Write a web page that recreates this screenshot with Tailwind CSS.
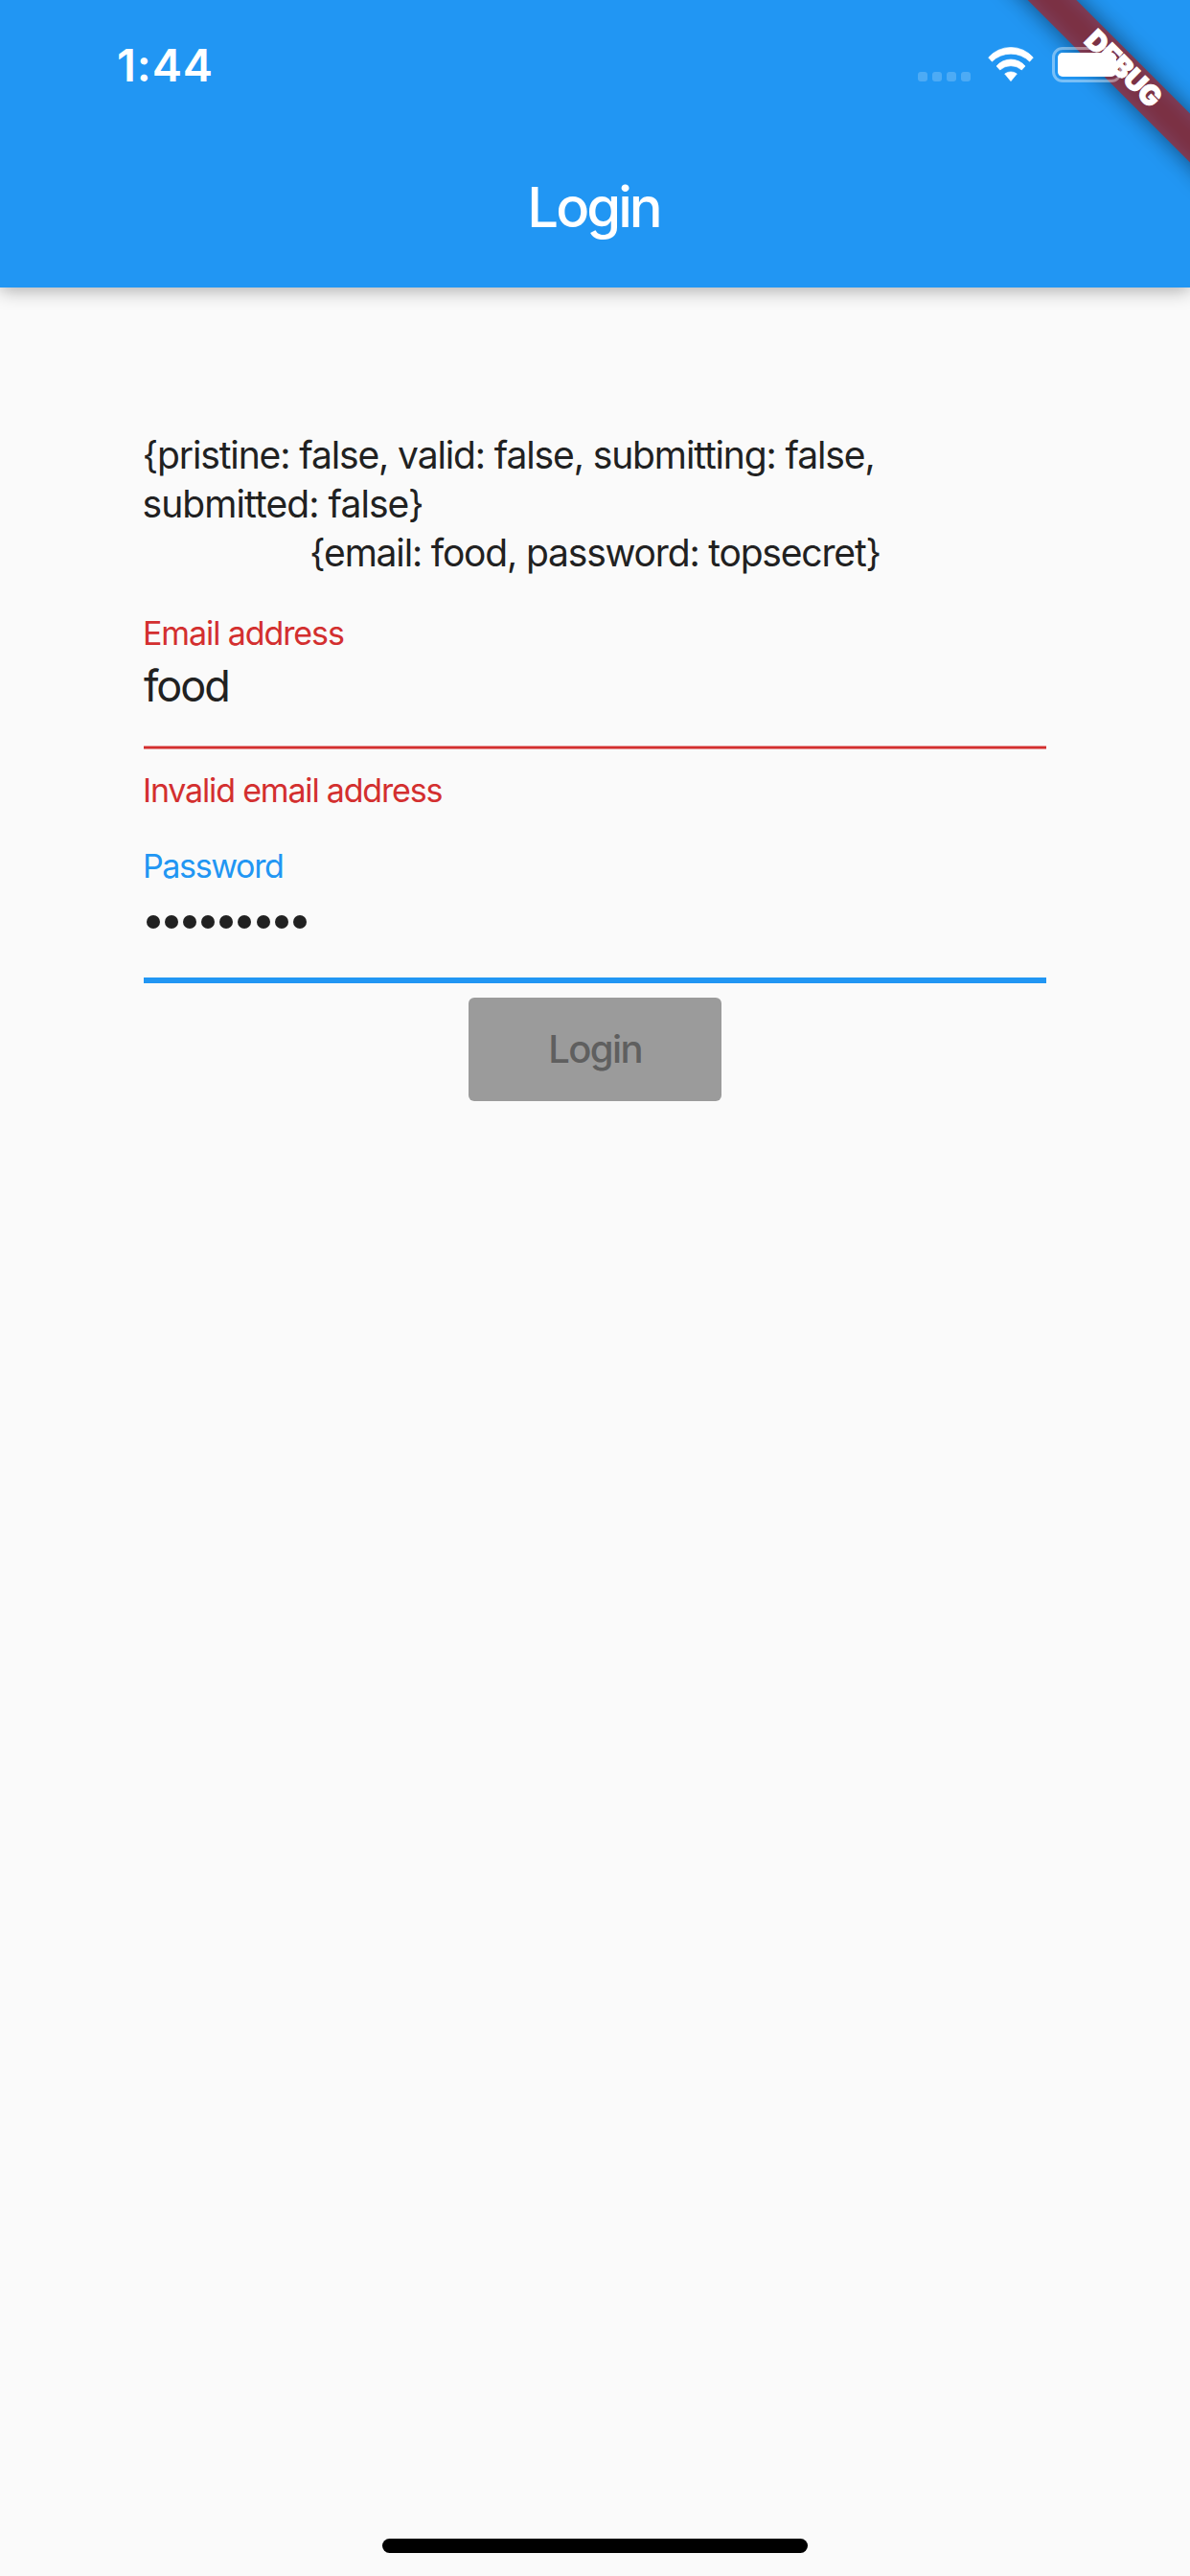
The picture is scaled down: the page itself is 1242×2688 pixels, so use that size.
<!DOCTYPE html>
<html lang="en">
<head>
<meta charset="utf-8">
<title>Login</title>
<script src="https://cdn.jsdelivr.net/npm/@tailwindcss/browser@4"></script>
</head>
<body class="bg-[#fafafa]">
<div class="relative flex h-[2688px] w-[1242px] flex-col overflow-hidden bg-[#fafafa] font-['Inter',sans-serif] text-[#212121]">
  <header class="flex h-[300px] shrink-0 flex-col bg-[#2196f3] text-white shadow-[0_3px_18px_rgba(0,0,0,0.32)]">
    <!-- Status bar -->
    <div class="flex h-[132px] items-start justify-between pl-[122px] pr-[64px]">
      <span class="mt-10 text-[47px] font-semibold leading-[56px] tracking-[0.9px]">1:44</span>
      <div class="relative z-20 mt-[49px] flex items-start">
        <div class="mt-[26px] flex gap-[5px]">
          <i class="size-[10px] rounded-[3px] bg-white/20"></i>
          <i class="size-[10px] rounded-[3px] bg-white/20"></i>
          <i class="size-[10px] rounded-[3px] bg-white/20"></i>
          <i class="size-[10px] rounded-[3px] bg-white/20"></i>
        </div>
        <svg class="ml-[18px] h-[37px] w-[48px]" viewBox="34 27 144 111" fill="#fff" stroke="#fff" stroke-width="2" stroke-linejoin="round">
          <path d="M36 60A93 93 0 0 1 176 60L165 72.500A84.500 84.500 0 0 0 47 72.500ZM61 87A59 59 0 0 1 151 87L140 99A51 51 0 0 0 72 99ZM87 111A32 32 0 0 1 125 111L106 134Z"/>
        </svg>
        <svg class="ml-[19px] h-[37px] w-[80px]" viewBox="0 0 80 37" fill="none">
          <rect x="1.500" y="1.500" width="70" height="34" rx="9.500" stroke="#fff" stroke-opacity=".4" stroke-width="3"/>
          <rect x="6" y="6" width="61" height="25" rx="5" fill="#fff"/>
          <path d="M76 12.500c3 1 4 3 4 6s-1 5-4 6z" fill="#fff" fill-opacity=".4"/>
        </svg>
      </div>
    </div>
    <div class="flex h-[168px] items-center justify-center">
      <h1 class="pr-[3px] text-[58px] font-medium leading-[70px] tracking-[-3px]">Login</h1>
    </div>
  </header>

  <!-- Corner debug ribbon -->
  <div class="absolute right-0 top-0 z-10 size-[300px] overflow-hidden">
    <div class="absolute left-[-71px] top-[54.500px] h-[36px] w-[600px] rotate-45">
      <div class="absolute inset-0 bg-black/50 blur-[12px]"></div>
      <div class="absolute inset-0 flex items-center justify-center bg-[#b71c1c]/63">
        <span class="relative top-[-2px] text-[29px] font-black leading-[36px] tracking-[-0.4px] text-white [-webkit-text-stroke:1px_white]">DEBUG</span>
      </div>
    </div>
  </div>

  <main class="flex flex-col px-[150px] pt-[149px]">
    <p class="ml-[-1.500px] whitespace-nowrap text-[39px] leading-[51px]"><span class="tracking-[-1.12px]">{pristine: false, valid: false, submitting: false,</span><br><span class="tracking-[-0.92px]">submitted: false}</span></p>
    <p class="text-center text-[39px] leading-[51px] tracking-[-1.17px]">{email: food, password: topsecret}</p>

    <label class="ml-[-1px] mt-[39px] text-[34px] leading-[40px] tracking-[-1.1px] text-[#d32f2f]">Email address</label>
    <div class="mt-[7px] text-[45px] leading-[56px] tracking-[-2px]">food</div>
    <div class="mt-[34px] h-1 border-y border-[#d32f2f]/50 bg-[#d32f2f] bg-clip-padding"></div>
    <p class="ml-[-1px] mt-[23px] text-[34px] leading-[40px] tracking-[-1.18px] text-[#d32f2f]">Invalid email address</p>

    <label class="ml-[-1px] mt-[39px] text-[34px] leading-[40px] tracking-[-1.36px] text-[#2196f3]">Password</label>
    <div class="mt-[10px] flex h-[56px] items-center gap-[5.200px] pl-[2.500px]">
      <i class="size-[14px] rounded-full bg-[#212121]"></i><i class="size-[14px] rounded-full bg-[#212121]"></i><i class="size-[14px] rounded-full bg-[#212121]"></i><i class="size-[14px] rounded-full bg-[#212121]"></i><i class="size-[14px] rounded-full bg-[#212121]"></i><i class="size-[14px] rounded-full bg-[#212121]"></i><i class="size-[14px] rounded-full bg-[#212121]"></i><i class="size-[14px] rounded-full bg-[#212121]"></i><i class="size-[14px] rounded-full bg-[#212121]"></i>
    </div>
    <div class="mt-[30px] h-[6px] bg-[#2196f3]"></div>

    <button disabled class="mt-[15px] h-[108px] w-[264px] self-center rounded-[6px] bg-[#9b9b9b] text-[40px] font-medium tracking-[-1.600px] text-[#5f5f5f]">Login</button>
  </main>

  <div class="mb-6 mt-auto h-[15px] w-[444px] self-center rounded-full bg-black"></div>
</div>
</body>
</html>
